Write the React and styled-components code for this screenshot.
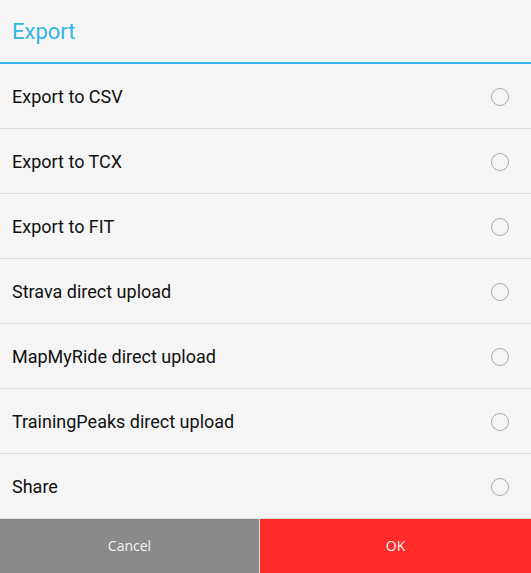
import React, { useState } from "react";
import styled, { createGlobalStyle } from "styled-components";

const GlobalStyle = createGlobalStyle`
  html, body {
    margin: 0;
    padding: 0;
    background: #f5f5f5;
  }
  * {
    box-sizing: border-box;
  }
`;

const options = [
  "Export to CSV",
  "Export to TCX",
  "Export to FIT",
  "Strava direct upload",
  "MapMyRide direct upload",
  "TrainingPeaks direct upload",
  "Share",
];

function App() {
  const [selected, setSelected] = useState(null);
  return (
    <>
      <GlobalStyle />
      <StDialog>
        <StTitle>Export</StTitle>
        <StList>
          {options.map((label, i) => (
            <StRow key={label} onClick={() => setSelected(i)}>
              <span>{label}</span>
              <StRadio checked={selected === i} />
            </StRow>
          ))}
        </StList>
        <StButtonBar>
          <StButton variant="cancel">Cancel</StButton>
          <StButton variant="ok">OK</StButton>
        </StButtonBar>
      </StDialog>
    </>
  );
}

const StDialog = styled.div`
  width: 531px;
  height: 573px;
  display: flex;
  flex-direction: column;
  background: #f5f5f5;
  font-family: Roboto, "Liberation Sans", sans-serif;
`;

const StTitle = styled.div`
  height: 64px;
  padding: 1px 12px 0;
  display: flex;
  align-items: center;
  font-size: 22px;
  color: #33b5e5;
  border-bottom: 2px solid #33b5e5;
`;

const StList = styled.div`
  flex: 1;
  display: flex;
  flex-direction: column;
`;

const StRow = styled.div`
  height: 65px;
  display: flex;
  align-items: center;
  justify-content: space-between;
  padding: 1px 22px 0 12px;
  font-size: 18px;
  color: #111111;
  border-bottom: 1px solid #dcdcdc;
  cursor: pointer;
`;

const StRadio = styled.span`
  width: 18px;
  height: 18px;
  border-radius: 50%;
  border: 1.5px solid #a8a8a8;
  box-shadow: ${({ checked }) => (checked ? "inset 0 0 0 4px #33b5e5" : "none")};
`;

const StButtonBar = styled.div`
  height: 54px;
  display: grid;
  grid-template-columns: 259px 1fr;
  gap: 1px;
  background: #dcdcdc;
`;

const StButton = styled.button`
  border: none;
  margin: 0;
  padding: 0 0 2px;
  background: ${({ variant }) => (variant === "ok" ? "#ff2a2a" : "#8a8a8a")};
  color: #f4f4f4;
  font-family: "Open Sans", "Noto Sans", sans-serif;
  font-size: 14px;
  cursor: pointer;
`;

export default App;
